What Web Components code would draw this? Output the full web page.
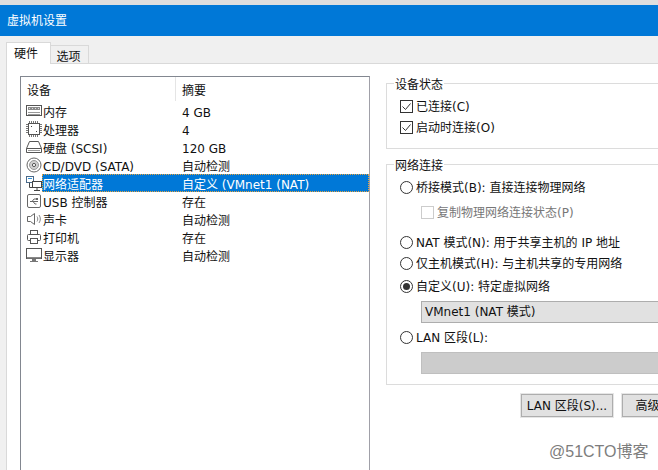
<!DOCTYPE html>
<html lang="zh">
<head>
<meta charset="utf-8">
<title>虚拟机设置</title>
<style>
  html, body { margin: 0; height: 100%; overflow: hidden; background: #f0f0f0; }
  body {
    width: 658px; height: 470px; position: relative;
    font: 12px/16px "DejaVu Sans", "Noto Sans CJK SC", sans-serif;
    color: #111;
  }
  vm-settings { width: 658px; height: 470px; }
</style>
</head>
<body>
<vm-settings>
  <vm-titlebar slot="title">虚拟机设置</vm-titlebar>
  <vm-tabs slot="tabs"></vm-tabs>
  <vm-device-list slot="list">
    <vm-device-row icon="memory" name="内存" summary="4 GB"></vm-device-row>
    <vm-device-row icon="cpu" name="处理器" summary="4"></vm-device-row>
    <vm-device-row icon="disk" name="硬盘 (SCSI)" summary="120 GB"></vm-device-row>
    <vm-device-row icon="cd" name="CD/DVD (SATA)" summary="自动检测"></vm-device-row>
    <vm-device-row icon="net" name="网络适配器" summary="自定义 (VMnet1 (NAT)" selected></vm-device-row>
    <vm-device-row icon="usb" name="USB 控制器" summary="存在"></vm-device-row>
    <vm-device-row icon="sound" name="声卡" summary="自动检测"></vm-device-row>
    <vm-device-row icon="printer" name="打印机" summary="存在"></vm-device-row>
    <vm-device-row icon="display" name="显示器" summary="自动检测"></vm-device-row>
  </vm-device-list>
  <vm-group slot="side" legend="设备状态" style="height:66px">
    <vm-option type="check" checked style="margin-top:14px">已连接(C)</vm-option>
    <vm-option type="check" checked style="margin-top:5px">启动时连接(O)</vm-option>
  </vm-group>
  <vm-group slot="side" legend="网络连接" style="height:221px;margin-top:15px">
    <vm-option type="radio" style="margin-top:14px">桥接模式(B): 直接连接物理网络</vm-option>
    <vm-option type="check" disabled style="margin:9px 0 0 21px">复制物理网络连接状态(P)</vm-option>
    <vm-option type="radio" style="margin-top:14px">NAT 模式(N): 用于共享主机的 IP 地址</vm-option>
    <vm-option type="radio" style="margin-top:5px">仅主机模式(H): 与主机共享的专用网络</vm-option>
    <vm-option type="radio" checked style="margin-top:7px">自定义(U): 特定虚拟网络</vm-option>
    <vm-field style="margin-top:7px">VMnet1 (NAT 模式)</vm-field>
    <vm-option type="radio" style="margin-top:6px">LAN 区段(L):</vm-option>
    <vm-field empty style="margin-top:7px"></vm-field>
  </vm-group>
  <vm-buttons slot="side">
    <vm-button style="width:92px">LAN 区段(S)...</vm-button>
    <vm-button style="width:80px">高级(V)...</vm-button>
  </vm-buttons>
</vm-settings>
<vm-watermark>@51CTO博客</vm-watermark>

<script>
// icon drawings for the device list, all on a 16x16 grid
const ICONS = {
  memory: `<rect x="0.500" y="2.500" width="15" height="10" fill="#fff" stroke="#555"/><rect x="2" y="4" width="12" height="3" fill="#8a8a8a"/><path d="M3 5.500h1M6 5.500h1M9 5.500h1M12 5.500h1" stroke="#ddd"/><path d="M2 9.500h12M2 11.500h12" stroke="#999"/>`,
  cpu: `<rect x="2.500" y="2.500" width="11" height="11" fill="#fff" stroke="#555"/><path d="M3.500 0v2M5.500 0v2M7.500 0v2M9.500 0v2M11.500 0v2M3.500 14v2M5.500 14v2M7.500 14v2M9.500 14v2M11.500 14v2M0 3.500h2M0 5.500h2M0 7.500h2M0 9.500h2M0 11.500h2M14 3.500h2M14 5.500h2M14 7.500h2M14 9.500h2M14 11.500h2" stroke="#777"/><path d="M5 5h1v1H5zM10 10h1v1h-1z" fill="#444"/>`,
  disk: `<path d="M3.500 2.500h9l3 7v4h-15v-4z" fill="#fff" stroke="#555"/><path d="M0.500 9.500h15" stroke="#555"/><path d="M2 11.500h12" stroke="#999"/>`,
  cd: `<circle cx="8" cy="8" r="7" fill="#fff" stroke="#666"/><circle cx="8" cy="8" r="4.500" fill="#d0d0d0" stroke="#999"/><circle cx="8" cy="8" r="1.600" fill="#fff" stroke="#555"/>`,
  net: `<rect x="0.500" y="1.500" width="7" height="6" fill="#fff" stroke="#4a6a8a"/><rect x="6.500" y="6.500" width="9" height="6" fill="#fff" stroke="#444"/><path d="M3.500 8v4.500h3M11 13v2M8 15.500h6" fill="none" stroke="#444"/><path d="M2 3.500h4" stroke="#2f8fd8"/>`,
  usb: `<rect x="1.500" y="1.500" width="13" height="13" rx="1.500" fill="#fff" stroke="#666"/><path d="M4 8.500h8M6 8.500l2-2.500h2M7 8.500l2 2.500h1.500" fill="none" stroke="#666"/><rect x="10" y="5" width="2" height="2" fill="#666"/>`,
  sound: `<path d="M1.500 5.500h3l4-3v11l-4-3h-3z" fill="#fff" stroke="#666"/><path d="M11 5.500c1 1.500 1 3.500 0 5M13 4c1.800 2.500 1.800 5.500 0 8" fill="none" stroke="#888"/>`,
  printer: `<rect x="4.500" y="1.500" width="7" height="4" fill="#fff" stroke="#555"/><rect x="1.500" y="5.500" width="13" height="6" rx="1" fill="#fff" stroke="#555"/><rect x="4.500" y="9.500" width="7" height="5" fill="#fff" stroke="#555"/>`,
  display: `<rect x="0.500" y="1.500" width="15" height="10" fill="#fff" stroke="#555"/><path d="M1 10h14v1.500H1z" fill="#888"/><path d="M6 12h4v2H6zM4 14h8v1H4z" fill="#777"/>`
};

class VmSettings extends HTMLElement {
  constructor() {
    super();
    this.attachShadow({ mode: 'open' });
    this.shadowRoot.innerHTML = `
      <style>
        :host { display: flex; flex-direction: column; overflow: hidden; border-top: 5px solid #dedede; box-sizing: border-box; }
        .tabs { padding: 7px 0 0 6px; }
        .panel {
          flex: 1; display: flex; gap: 16px; min-height: 0;
          margin-left: 6px; padding: 12px 0 0 13px;
          background: #fff; border-top: 1px solid #d9d9d9; border-left: 1px solid #d9d9d9;
        }
        .side { flex: none; width: 300px; padding-top: 7px; }
      </style>
      <slot name="title"></slot>
      <div class="tabs"><slot name="tabs"></slot></div>
      <div class="panel">
        <slot name="list"></slot>
        <div class="side"><slot name="side"></slot></div>
      </div>`;
  }
}

class VmTitlebar extends HTMLElement {
  constructor() {
    super();
    this.attachShadow({ mode: 'open' });
    this.shadowRoot.innerHTML = `
      <style>
        :host { display: flex; align-items: center; height: 31px; padding-left: 7px; background: #0078d7; color: #fff; }
      </style>
      <slot></slot>`;
  }
}

class VmTabs extends HTMLElement {
  constructor() {
    super();
    this.attachShadow({ mode: 'open' });
    this.shadowRoot.innerHTML = `
      <style>
        :host { display: flex; align-items: flex-end; height: 21px; margin-bottom: -1px; position: relative; z-index: 1; }
        div { box-sizing: border-box; border: 1px solid #d9d9d9; border-bottom: 0; text-align: center; }
        .on { width: 45px; height: 22px; line-height: 23px; padding-right: 5px; background: #fff; }
        .off { width: 38px; height: 19px; line-height: 22px; padding-right: 2px; border-left: 0; background: #f0f0f0; border-bottom: 1px solid #d9d9d9; }
      </style>
      <div class="on">硬件</div><div class="off">选项</div>`;
  }
}

class VmDeviceList extends HTMLElement {
  constructor() {
    super();
    this.attachShadow({ mode: 'open' });
    this.shadowRoot.innerHTML = `
      <style>
        :host { display: block; flex: none; width: 350px; height: 420px; box-sizing: border-box; border: 1px solid #828790; border-right-color: #a0a0a8; background: #fff; }
        .head { display: grid; grid-template-columns: 155px 1fr; height: 24px; margin-bottom: 1px; }
        .head span { display: flex; align-items: center; padding-top: 3px; }
        .head span:first-child { padding-left: 6px; border-right: 1px solid #e5e5e5; }
        .head span:last-child { padding-left: 6px; }
      </style>
      <div class="head"><span>设备</span><span>摘要</span></div>
      <slot></slot>`;
  }
}

class VmDeviceRow extends HTMLElement {
  constructor() {
    super();
    this.attachShadow({ mode: 'open' });
  }

  connectedCallback() {
    const selected = this.hasAttribute('selected');
    this.shadowRoot.innerHTML = `
      <style>
        :host { display: grid; grid-template-columns: 21px 1fr; height: 18px; align-items: center; white-space: nowrap; }
        svg { width: 16px; height: 16px; margin-left: 5px; display: block; }
        .line { display: grid; grid-template-columns: 139px 1fr; height: 18px; line-height: 22px; padding-left: 1px; box-sizing: border-box; }
        .line.sel { background: #0078d7; color: #fff; outline: 1px dotted #e8a33d; outline-offset: -1px; }
      </style>
      <svg viewBox="0 0 16 16">${ICONS[this.getAttribute('icon')]}</svg>
      <div class="line ${selected ? 'sel' : ''}">
        <span>${this.getAttribute('name')}</span><span>${this.getAttribute('summary')}</span>
      </div>`;
  }
}

class VmGroup extends HTMLElement {
  constructor() {
    super();
    this.attachShadow({ mode: 'open' });
  }

  connectedCallback() {
    this.shadowRoot.innerHTML = `
      <style>
        :host { display: block; box-sizing: border-box; border: 1px solid #dcdcdc; padding: 0 0 0 13px; position: relative; }
        .legend { position: absolute; top: -7px; left: 7px; padding: 0 1px 0 1px; background: #fff; }
        .legend + div { display: flex; flex-direction: column; }
      </style>
      <div class="legend">${this.getAttribute('legend')}</div>
      <div><slot></slot></div>`;
  }
}

class VmOption extends HTMLElement {
  constructor() {
    super();
    this.attachShadow({ mode: 'open' });
  }

  connectedCallback() {
    const checked = this.hasAttribute('checked');
    const disabled = this.hasAttribute('disabled');
    const mark = this.getAttribute('type') === 'radio'
      ? `<circle cx="6.500" cy="6.500" r="6" fill="#fff" stroke="#333"/>${checked ? '<circle cx="6.500" cy="6.500" r="3.500" fill="#333"/>' : ''}`
      : `<rect x="0.500" y="0.500" width="12" height="12" fill="#fff" stroke="${disabled ? '#cccccc' : '#333'}"/>${checked ? '<path d="M2.500 6.500l3 3 5-6" fill="none" stroke="#333"/>' : ''}`;
    this.shadowRoot.innerHTML = `
      <style>
        :host { display: flex; align-items: center; gap: 3px; height: 16px; color: ${disabled ? '#777' : 'inherit'}; white-space: nowrap; }
        svg { width: 13px; height: 13px; flex: none; display: block; }
        .label { margin-top: 2px; }
      </style>
      <svg viewBox="0 0 13 13">${mark}</svg><span class="label"><slot></slot></span>`;
  }
}

class VmField extends HTMLElement {
  constructor() {
    super();
    this.attachShadow({ mode: 'open' });
    this.shadowRoot.innerHTML = `
      <style>
        :host { display: flex; align-items: center; box-sizing: border-box; height: 22px; margin-left: 21px; padding-left: 3px; background: #e1e1e1; border: 1px solid #adadad; }
        :host([empty]) { background: #cccccc; border-color: #bfbfbf; }
      </style>
      <slot></slot>`;
  }
}

class VmButtons extends HTMLElement {
  constructor() {
    super();
    this.attachShadow({ mode: 'open' });
    this.shadowRoot.innerHTML = `
      <style>
        :host { display: flex; gap: 9px; margin: 9px 0 0 135px; }
      </style>
      <slot></slot>`;
  }
}

class VmButton extends HTMLElement {
  constructor() {
    super();
    this.attachShadow({ mode: 'open' });
    this.shadowRoot.innerHTML = `
      <style>
        :host { display: flex; flex: none; align-items: center; justify-content: center; box-sizing: border-box; height: 23px; background: #e1e1e1; border: 1px solid #adadad; outline: 1px solid #e6e6e6; white-space: nowrap; }
      </style>
      <slot></slot>`;
  }
}

// sits over the page corner, like the stamp on the picture
class VmWatermark extends HTMLElement {
  constructor() {
    super();
    this.attachShadow({ mode: 'open' });
    this.shadowRoot.innerHTML = `
      <style>
        :host { position: absolute; left: 549px; top: 442px; font: 16px/20px "Liberation Sans", "Noto Sans CJK SC", sans-serif; color: #7d7d7d; text-shadow: 0 0 2px #fff; }
      </style>
      <slot></slot>`;
  }
}

customElements.define('vm-settings', VmSettings);
customElements.define('vm-titlebar', VmTitlebar);
customElements.define('vm-tabs', VmTabs);
customElements.define('vm-device-list', VmDeviceList);
customElements.define('vm-device-row', VmDeviceRow);
customElements.define('vm-group', VmGroup);
customElements.define('vm-option', VmOption);
customElements.define('vm-field', VmField);
customElements.define('vm-buttons', VmButtons);
customElements.define('vm-button', VmButton);
customElements.define('vm-watermark', VmWatermark);
</script>
</body>
</html>
